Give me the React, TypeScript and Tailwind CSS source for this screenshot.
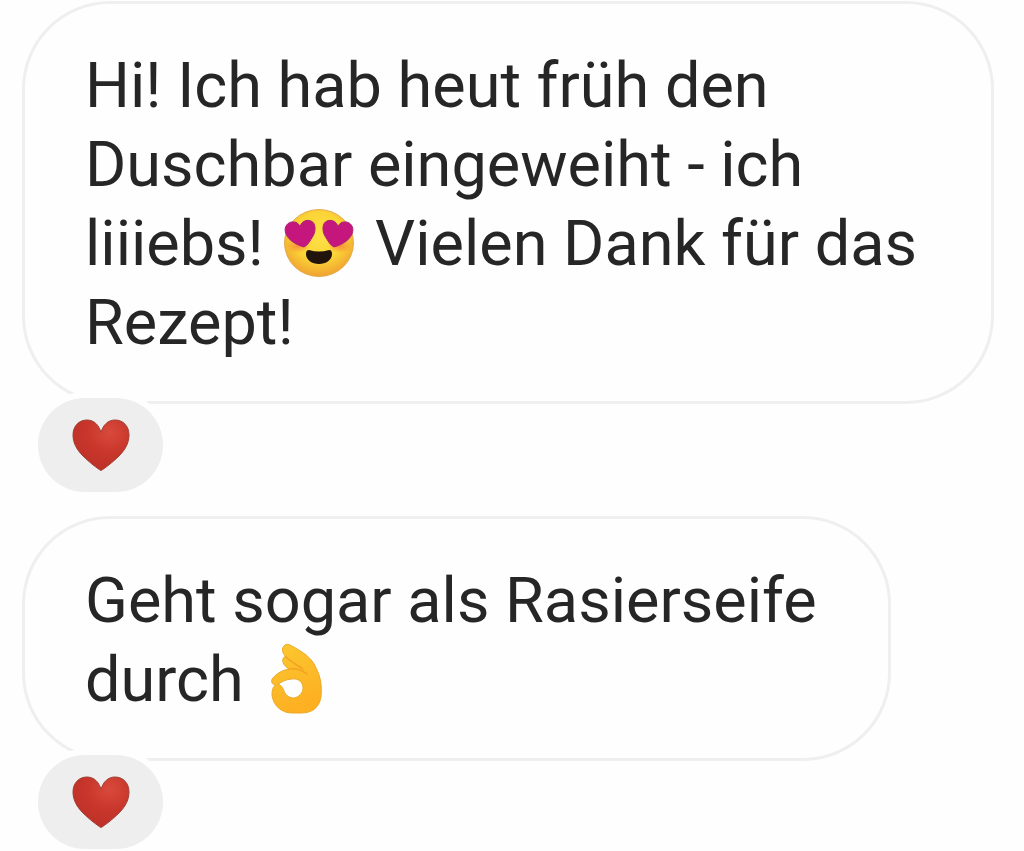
import type { ReactNode } from "react";

function HeartEyes() {
  return (
    <svg viewBox="-2 0 80 72" role="img" aria-label="Heart eyes" className="inline-block h-[72px] w-20 align-[-14px]">
      <defs>
        <radialGradient id="face" cx="0.5" cy="0.4" r="0.6">
          <stop offset="0" stopColor="#fde047" />
          <stop offset="0.6" stopColor="#fbd436" />
          <stop offset="1" stopColor="#f0a231" />
        </radialGradient>
        <radialGradient id="cheek">
          <stop offset="0" stopColor="#f5733f" stopOpacity="0.7" />
          <stop offset="1" stopColor="#f5733f" stopOpacity="0" />
        </radialGradient>
      </defs>
      <ellipse cx="38" cy="36" rx="34.5" ry="33.5" fill="url(#face)" stroke="#e5ac50" strokeWidth="1" />
      <ellipse cx="17" cy="39" rx="12" ry="7" fill="url(#cheek)" />
      <ellipse cx="59" cy="39" rx="12" ry="7" fill="url(#cheek)" />
      <path
        d="M23 40C16 38 8 34 5 27C2 20 7 14 13 15C16 15 18 17 19 20C20 15 25 12 30 14C35 16 35 24 32 29C29 34 27 38 23 40Z"
        fill="#c5167e"
        stroke="#ad2372"
        strokeWidth="1"
      />
      <path
        d="M53 40C60 38 68 34 71 27C74 20 69 14 63 15C60 15 58 17 57 20C56 15 51 12 46 14C41 16 41 24 44 29C47 34 49 38 53 40Z"
        fill="#c5167e"
        stroke="#ad2372"
        strokeWidth="1"
      />
      <path d="M28 43Q38 46 48 43Q51 43 51 47C51 53 45 57 38 57C31 57 25 53 25 47Q25 43 28 43Z" fill="#20140d" />
    </svg>
  );
}

function OkHand() {
  return (
    <svg viewBox="-2 0 80 72" role="img" aria-label="OK hand" className="inline-block h-[72px] w-20 align-[-14px]">
      <defs>
        <linearGradient id="hand" x1="0" y1="0" x2="0.3" y2="1">
          <stop offset="0" stopColor="#fbc82f" />
          <stop offset="1" stopColor="#fdb022" />
        </linearGradient>
      </defs>
      <path
        fillRule="evenodd"
        d="M24 2C27 0 31 3 36 6C45 11 52 17 55 25C60 34 61 44 60 54C58 65 51 70 40 70H31C20 70 12 62 11 52C11 47 12 43 15 42C11 42 9 38 12 35C16 30 22 27 28 26C23 23 21 19 22 16C23 13 24 14 25 14C21 10 20 5 24 2ZM17 41C20 42 22 45 23 48C25 53 29 55 33 55C38 54 42 50 42 45C42 39 37 35 31 36C25 36 21 39 17 41Z"
        fill="url(#hand)"
        stroke="#eda927"
        strokeWidth="1"
      />
      <path
        d="M25 14C29 18 36 22 42 26M28 26C34 25 41 27 46 31"
        fill="none"
        stroke="#f2a322"
        strokeWidth="1.5"
        strokeLinecap="round"
      />
    </svg>
  );
}

function Heart() {
  return (
    <svg viewBox="0 0 58 52" aria-hidden="true" className="h-[52px] w-[58px]">
      <defs>
        <radialGradient id="heart" cx="0.65" cy="0.25" r="0.8">
          <stop offset="0" stopColor="#d84a3c" />
          <stop offset="0.5" stopColor="#c9362b" />
          <stop offset="1" stopColor="#bb3028" />
        </radialGradient>
      </defs>
      <path
        d="M29 51.5C26 50 17 43 11 37C4 30 1 23 1 16C1 7 7 1 15 1C22 1 27 6 29 13.5C31 6 36 1 43 1C51 1 57 7 57 16C57 23 54 30 47 37C41 43 32 50 29 51.5Z"
        fill="url(#heart)"
        stroke="#a03f34"
        strokeWidth="1"
      />
    </svg>
  );
}

function Message({ children, className }: { children: ReactNode; className: string }) {
  return (
    <article className="flex flex-col items-start">
      <p
        className={`w-full rounded-[88px] border-[3px] border-[#efefef] pt-[42px] pr-[50px] pb-[39px] pl-[60px] text-[63px] leading-[79px] text-[#262626] ${className}`}
      >
        {children}
      </p>
      <button
        type="button"
        aria-label="Heart reaction"
        className="relative -mt-[6px] ml-4 flex h-[94px] w-[125px] items-center justify-center rounded-full bg-[#eeeeee] ring-6 ring-[#fefefe]"
      >
        <Heart />
      </button>
    </article>
  );
}

export default function App() {
  return (
    <main className="flex min-h-screen flex-col gap-6 bg-[#fefefe] pt-px pr-[30px] pl-[22px] font-[Roboto,sans-serif]">
      <Message className="max-w-[972px]">
        Hi! Ich hab heut früh den Duschbar eingeweiht - ich liiiebs! <HeartEyes /> Vielen Dank für das Rezept!
      </Message>
      <Message className="max-w-[869px]">
        Geht sogar als Rasierseife durch <OkHand />
      </Message>
    </main>
  );
}
